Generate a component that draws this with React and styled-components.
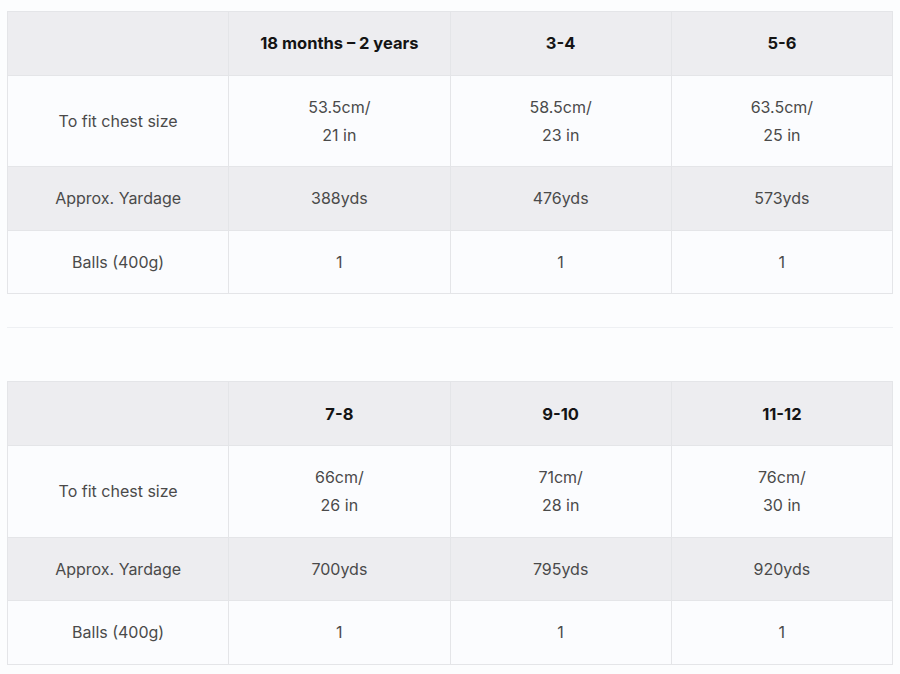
import React from "react";
import styled, { createGlobalStyle } from "styled-components";

const Global = createGlobalStyle`
  html, body { margin: 0; padding: 0; background: #fcfdfe; }
  body { font-family: Inter, "Noto Sans", "Liberation Sans", sans-serif; }
`;

const Page = styled.div`
  padding: 11px 7px 10px 7px;
  width: 886px;
`;

const Table = styled.table`
  width: 100%;
  border-collapse: collapse;
  table-layout: fixed;
  border: 1px solid #e4e5e8;
`;

const Row = styled.tr`
  background: ${(p) => (p.$shaded ? "#ededf0" : "#fbfcfe")};
`;

const Cell = styled.td`
  border: 1px solid #e4e5e8;
  padding: 17.3px 10px 17.3px;
  text-align: center;
  vertical-align: middle;
  font-size: ${(p) => (p.$head ? "16.5px" : "16px")};
  line-height: 28px;
  color: ${(p) => (p.$head ? "#141414" : "#4a4a4a")};
  font-weight: ${(p) => (p.$head ? 700 : 400)};
`;

const Divider = styled.hr`
  border: 0;
  border-top: 1px solid #eef0f3;
  margin: 33px 0 53px;
`;

const tables = [
  {
    sizes: ["18 months – 2 years", "3-4", "5-6"],
    chest: [["53.5cm/", "21 in"], ["58.5cm/", "23 in"], ["63.5cm/", "25 in"]],
    yards: ["388yds", "476yds", "573yds"],
    balls: ["1", "1", "1"],
  },
  {
    sizes: ["7-8", "9-10", "11-12"],
    chest: [["66cm/", "26 in"], ["71cm/", "28 in"], ["76cm/", "30 in"]],
    yards: ["700yds", "795yds", "920yds"],
    balls: ["1", "1", "1"],
  },
];

function SizeTable({ data }) {
  return (
    <Table>
      <tbody>
        <Row $shaded>
          <Cell $head />
          {data.sizes.map((s) => (
            <Cell $head key={s}>{s}</Cell>
          ))}
        </Row>
        <Row>
          <Cell>To fit chest size</Cell>
          {data.chest.map(([a, b], i) => (
            <Cell key={i}>
              {a}
              <br />
              {b}
            </Cell>
          ))}
        </Row>
        <Row $shaded>
          <Cell>Approx. Yardage</Cell>
          {data.yards.map((y, i) => (
            <Cell key={i}>{y}</Cell>
          ))}
        </Row>
        <Row>
          <Cell>Balls (400g)</Cell>
          {data.balls.map((b, i) => (
            <Cell key={i}>{b}</Cell>
          ))}
        </Row>
      </tbody>
    </Table>
  );
}

export default function App() {
  return (
    <>
      <Global />
      <Page>
        <SizeTable data={tables[0]} />
        <Divider />
        <SizeTable data={tables[1]} />
      </Page>
    </>
  );
}
